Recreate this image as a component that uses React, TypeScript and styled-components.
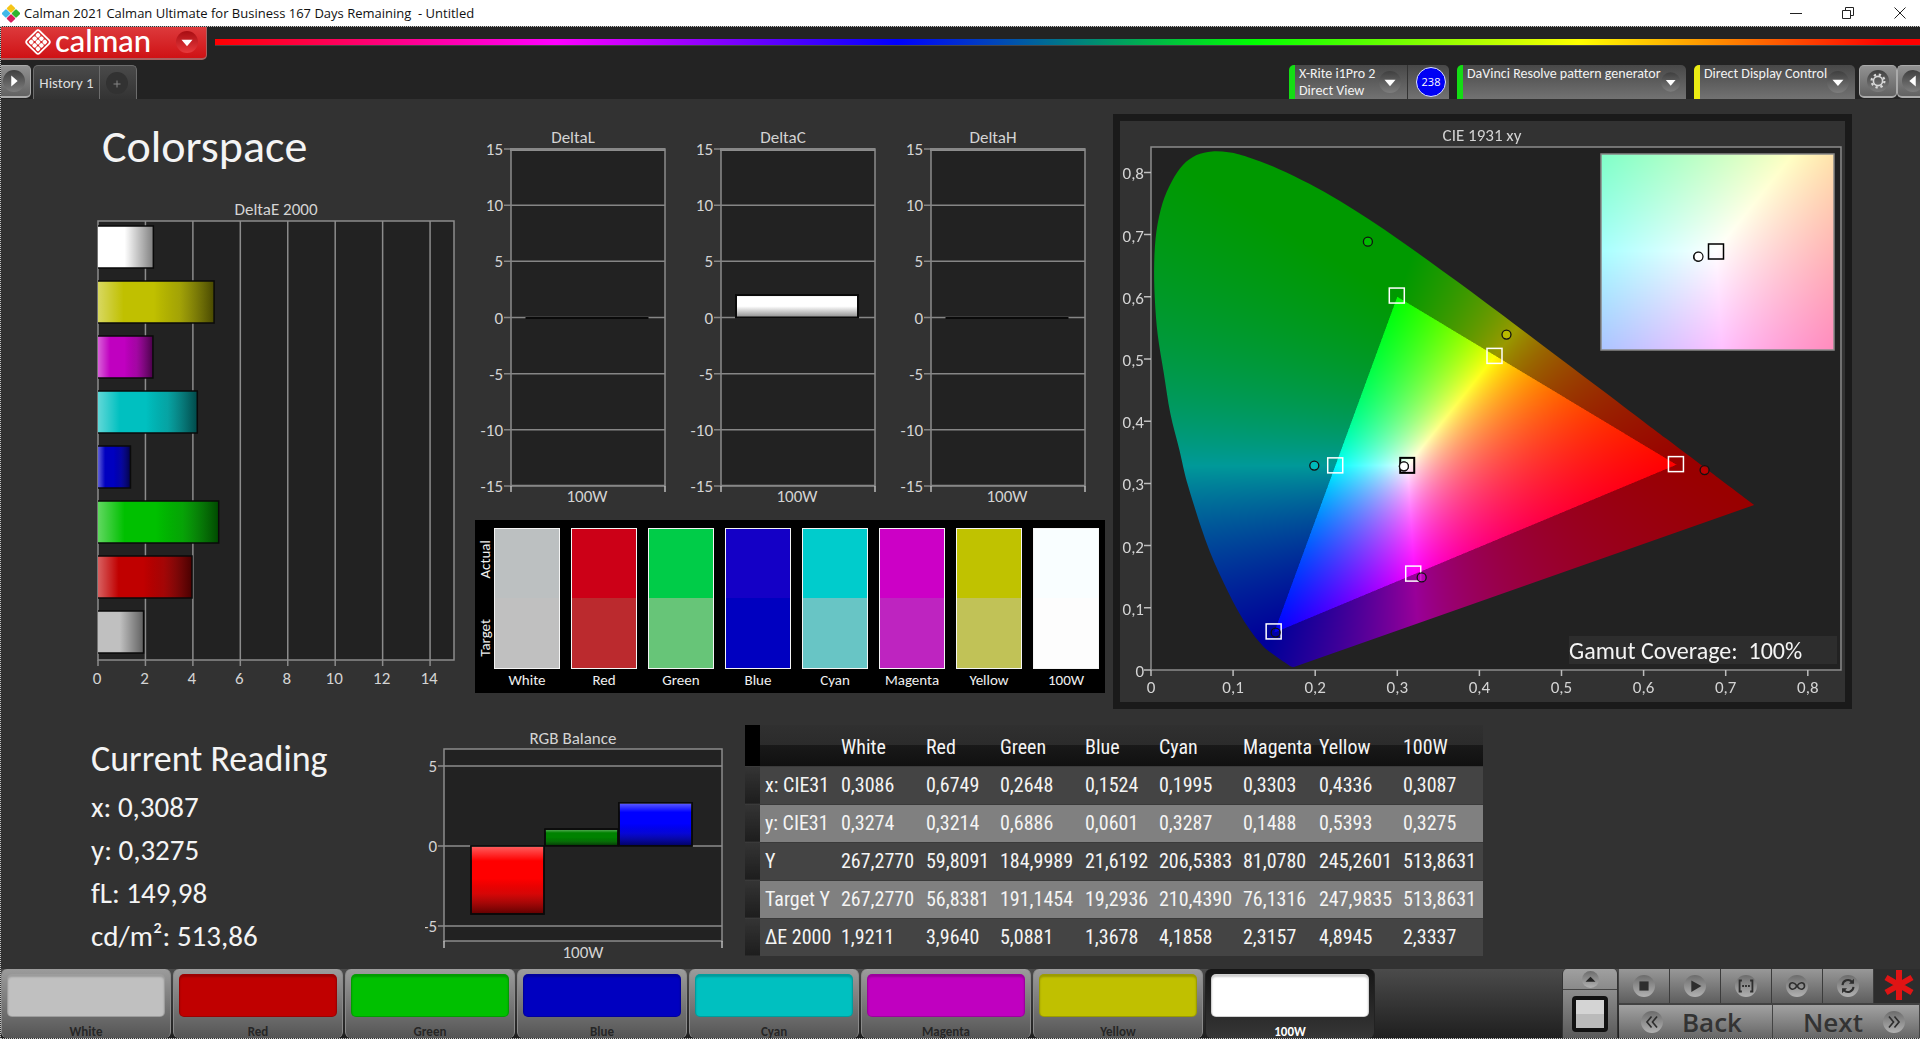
import React, { useLayoutEffect, useRef } from "react";
import styled, { createGlobalStyle, css } from "styled-components";

const uiFont = `Calibri, Carlito, Lato, sans-serif`;
const systemFont = `"Segoe UI", "Open Sans", "Noto Sans", sans-serif`;
const narrowFont = `"Roboto Condensed", Roboto, sans-serif`;

const GlobalStyle = createGlobalStyle`
  *, *::before, *::after { box-sizing: border-box; }
  body { margin: 0; background: #323232; font-family: ${uiFont}; }
  h1, h2, p { margin: 0; font-weight: 400; }
  button { font: inherit; border: 0; padding: 0; color: inherit; background: none; cursor: pointer; }
  svg { display: block; }
`;

/* ---------- window frame ---------- */

const Page = styled.div`
  display: flex;
  flex-direction: column;
  min-height: 100vh;
`;

const TitleBar = styled.header`
  display: flex;
  align-items: center;
  height: 26px;
  padding-left: 2px;
  background: #fff;
  color: #111;
  font: 13px/26px ${systemFont};
`;

const TitleText = styled.span`
  flex: 1;
  padding-left: 4px;
  white-space: pre;
`;

const WindowButton = styled.button`
  display: grid;
  place-items: center;
  width: 52px;
  height: 26px;
`;

const WindowButtons = styled.div`
  display: flex;
  margin-right: -6px;
  overflow: hidden;
`;

const AppFrame = styled.div`
  display: flex;
  flex: 1;
  flex-direction: column;
  border: 1px dotted #c4c4c4;
  border-right: 0;
  background: #323232;
`;

/* ---------- top bar ---------- */

const TopBar = styled.div`
  height: 72px;
  background: #232323;
`;

const BrandRow = styled.div`
  display: flex;
  align-items: flex-start;
  gap: 8px;
  height: 38px;
`;

const BrandButton = styled.button`
  display: flex;
  align-items: center;
  width: 206px;
  height: 33px;
  padding: 0 8px 2px 23px;
  border: 1px solid #a86060;
  border-width: 0 1px 2px 0;
  border-radius: 0 0 5px 0;
  background: linear-gradient(#dd3a3c, #cf1215);
  color: #fff;
`;

const BrandName = styled.span`
  flex: 1;
  padding: 0 0 4px 3px;
  text-align: left;
  font: 500 31px/24px "Lato Medium", Lato, sans-serif;
`;

const Spectrum = styled.div`
  flex: 1;
  height: 7px;
  margin-top: 12px;
  border-bottom: 1px solid #444;
  background: linear-gradient(90deg, #f00, #f0f 20%, #00f 40%, #0f0 61%, #ff0 80%, #f00 98%);
`;

const TabRow = styled.div`
  display: flex;
  height: 34px;
`;

const GreyKey = styled.button<{ $side: "left" | "right" | "both" }>`
  display: grid;
  place-items: center;
  height: 33px;
  width: ${(p) => (p.$side === "left" ? 30 : p.$side === "both" ? 38 : 23)}px;
  border: 1px solid #aaa;
  border-radius: ${(p) => (p.$side === "left" ? "0 5px 5px 0" : p.$side === "both" ? "5px" : "5px 0 0 5px")};
  border-bottom-width: 2px;
  ${(p) => p.$side === "left" && css`border-left: 0; padding-right: 4px;`}
  ${(p) => p.$side === "right" && css`border-right: 0; justify-items: start; padding-left: 4px; overflow: hidden;`}
  background: linear-gradient(#929292, #626262);
`;

const HistoryTabs = styled.div`
  display: flex;
  margin-left: 2px;
  border: 1px solid #6c6c6c;
  border-bottom: 0;
  border-radius: 5px 5px 0 0;
  background: linear-gradient(#4a4a4a, #333);
`;

const HistoryTab = styled.button`
  width: 66px;
  border-right: 1px solid #6c6c6c;
  color: #ddd;
  font-size: 15px;
`;

const AddTab = styled.button`
  display: grid;
  place-items: center;
  width: 36px;
  padding-right: 2px;
`;

const DeviceTabs = styled.div`
  display: flex;
  gap: 8px;
  margin-left: auto;
  margin-right: 4px;
`;

const DeviceTab = styled.div<{ $width: number; $status: string }>`
  display: flex;
  width: ${(p) => p.$width}px;
  border-left: 6px solid ${(p) => p.$status};
  border-radius: 5px 5px 0 0;
  background: linear-gradient(#484848, #727272);
`;

const DeviceButton = styled.button`
  display: flex;
  flex: 1;
  align-items: center;
  justify-content: space-between;
  min-width: 0;
  padding: 0 6px 0 4px;
  color: #f2f2f2;
  text-align: left;
  white-space: nowrap;
  font-size: 14px;
  line-height: 17px;
`;

const DeviceLabel = styled.span`
  align-self: flex-start;
`;

const MeterCell = styled.div`
  display: grid;
  align-items: center;
  justify-items: end;
  width: 42px;
  padding-right: 3px;
  border-left: 1px solid #333;
`;

const MeterBadge = styled.span`
  width: 30px;
  height: 30px;
  border: 1px solid #dfe4ff;
  border-radius: 50%;
  background: #0000f4;
  color: #fff;
  text-align: center;
  font: 11px/28px ${systemFont};
`;

/* ---------- work area ---------- */

const WorkArea = styled.main`
  flex: 1;
  padding-top: 15px;
`;

const UpperGrid = styled.div`
  display: grid;
  grid-template-columns: 474fr 638fr 807fr;
  align-items: start;
`;

const LowerGrid = styled.div`
  display: grid;
  grid-template-columns: 424fr 320fr 738fr 437fr;
  align-items: start;
  padding-top: 16px;
`;

const DeltaEColumn = styled.section`
  padding-left: 89px;
`;

const PageHeading = styled.h1`
  padding: 4px 0 15px 12px;
  color: #f4f4f4;
  font-size: 46px;
  line-height: 56px;
`;

const ChartSvg = styled.svg`
  width: 100%;
  height: auto;
  font-family: ${uiFont};
  font-size: 17px;
  fill: #d4d4d4;
`;

const DeltaColumn = styled.section`
  padding: 12px 8px 0 0;
`;

const ChartTrio = styled.div`
  display: grid;
  grid-template-columns: repeat(3, 1fr);
`;

const SwatchBoard = styled.div`
  display: flex;
  margin-top: 10px;
  padding: 8px 6px 2px 0;
  background: #000;
  color: #f0f0f0;
  font-size: 15px;
  line-height: 22px;
`;

const SideLabels = styled.div`
  display: grid;
  grid-template-rows: 62px 96px;
  width: 19px;
  height: 141px;
  color: #f0f0f0;
`;

const SideLabel = styled.span`
  place-self: center;
  writing-mode: vertical-rl;
  rotate: 180deg;
  line-height: 18px;
`;

const SwatchList = styled.div`
  display: grid;
  flex: 1;
  grid-template-columns: repeat(8, 1fr);
  column-gap: 11px;
`;

const SwatchFigure = styled.figure`
  margin: 0;
  text-align: center;
`;

const SwatchPair = styled.div<{ $actual: string; $target: string }>`
  height: 141px;
  border: 1px solid #f4f4f4;
  background: linear-gradient(${(p) => p.$actual} 50%, ${(p) => p.$target} 50%);
`;

const CiePanel = styled.section`
  display: grid;
  margin-right: 68px;
  border: 7px solid #1a1a1a;

  > * { grid-area: 1 / 1; }
`;

const CieCanvas = styled.canvas`
  width: 100%;
  height: auto;
`;

/* ---------- readings ---------- */

const Readings = styled.section`
  padding-left: 90px;
  color: #f4f4f4;
`;

const ReadingTitle = styled.h2`
  padding-top: 7px;
  font-size: 36px;
  line-height: 54px;
`;

const ReadingRow = styled.p`
  font-size: 29px;
  line-height: 43px;
`;

const DataTable = styled.table`
  width: 100%;
  border-collapse: collapse;
  table-layout: fixed;
  color: #f4f4f4;
  font: 20px/24px ${narrowFont};

  th, td {
    padding: 0 0 0 5px;
    text-align: left;
    font-weight: 400;
    white-space: nowrap;
  }
`;

const HeadRow = styled.tr`
  height: 41px;
  background: linear-gradient(#303030, #2b2b2b 50%, #191919 50%, #101010);

  > td:first-child { background: #000; }
  > th { padding-top: 4px; }
`;

const DataRow = styled.tr<{ $light: boolean }>`
  height: 38px;
  border-top: 1px solid #3a3a3a;
  background: ${(p) => (p.$light ? "#808080" : "#444")};

  > td:first-child { background: linear-gradient(#343434, #1d1d1d); }
`;

/* ---------- bottom bar ---------- */

const BottomBar = styled.footer`
  display: flex;
  align-items: stretch;
  height: 69px;
  background: linear-gradient(#4b4b4b, #1f1f1f);
`;

const PatchList = styled.div`
  display: flex;
  flex: 1;
  gap: 2px;
  min-width: 0;
`;

const PatchButton = styled.button<{ $active?: boolean }>`
  display: flex;
  flex: 0 1 170px;
  flex-direction: column;
  gap: 3px;
  padding: 5px 5px 0;
  border: 1px solid #8a8a8a;
  border-width: 0 1px;
  border-radius: 6px;
  background: linear-gradient(#9c9c9c, #555);
  color: #262626;
  font-size: 13px;
  font-weight: 700;
  line-height: 24px;
  ${(p) => p.$active && css`
    border-color: #222;
    background: linear-gradient(#161616, #363636);
    color: #fff;
  `}
`;

const PatchColor = styled.span<{ $color: string }>`
  width: 100%;
  height: 43px;
  flex: none;
  border: 1px solid rgba(0, 0, 0, 0.18);
  border-radius: 5px;
  background: ${(p) => p.$color};
  box-shadow: inset 0 2px 2px rgba(0, 0, 0, 0.2);
`;

const PatchName = styled.span`
  width: 100%;
  text-align: center;
`;

const LevelColumn = styled.div`
  display: flex;
  flex-direction: column;
  width: 56px;
  margin-right: 1px;
  border: 1px solid #333;
  border-width: 0 1px;
  border-radius: 5px 5px 0 0;
  overflow: hidden;
`;

const LevelUp = styled.button`
  display: grid;
  place-items: center;
  height: 21px;
  border-bottom: 1px solid #444;
  background: linear-gradient(#a0a0a0, #8a8a8a);
`;

const LevelPick = styled.button`
  display: grid;
  flex: 1;
  place-items: center;
  background: linear-gradient(#8c8c8c, #5a5a5a);
`;

const LevelChip = styled.span`
  width: 36px;
  height: 36px;
  border: 4px solid #111;
  border-radius: 4px;
  background: linear-gradient(#d4d4d4 50%, #bababa 50%);
`;

const Navigation = styled.div`
  display: grid;
  grid-template-columns: repeat(5, 51px) 46px;
  grid-template-rows: 34px 35px;
`;

const TransportButton = styled.button`
  display: grid;
  place-items: center;
  border-right: 1px solid #3c3c3c;
  background: linear-gradient(#989898, #5e5e5e);
`;

const Notice = styled.div`
  display: grid;
  place-items: center;
  padding: 0 0 2px 4px;
  background: #2d2d2d;
`;

const StepRow = styled.div`
  display: grid;
  grid-column: 1 / -1;
  grid-template-columns: 154px 1fr;
`;

const StepButton = styled.button<{ $forward?: boolean }>`
  display: flex;
  align-items: center;
  justify-content: space-between;
  padding: ${(p) => (p.$forward ? "0 14px 0 30px" : "0 30px 0 22px")};
  border-top: 2px solid #424242;
  border-right: 1px solid #444;
  background: linear-gradient(#a2a2a2, #666);
  color: #333;
  font: 600 26px/30px ${systemFont};
`;

/* ---------- icons ---------- */

type KnobTone = "dark" | "red" | "light";
const knobTones: Record<KnobTone, [string, string]> = {
  dark: ["#3f3f3f", "#7d7d7d"],
  red: ["#a80d12", "#e8393c"],
  light: ["#6c6c6c", "#b2b2b2"],
};

function Knob({ tone = "dark", size = 22, children }: { tone?: KnobTone; size?: number; children: React.ReactNode }) {
  const id = `knob-${tone}`;
  return (
    <svg width={size} height={size} viewBox="0 0 24 24" aria-hidden="true">
      <defs>
        <linearGradient id={id} x1="0" y1="0" x2="0" y2="1">
          <stop offset="0" stopColor={knobTones[tone][0]} />
          <stop offset="1" stopColor={knobTones[tone][1]} />
        </linearGradient>
      </defs>
      <circle cx="12" cy="12" r="12" fill={`url(#${id})`} />
      {children}
    </svg>
  );
}

const DownArrow = () => <path d="M6 9.500h12l-6 7z" fill="#fff" />;

function AppIcon() {
  return (
    <svg width="18" height="19" viewBox="1 1 16.500 16.500" aria-hidden="true">
      <g transform="rotate(45 9.250 9.250)">
        <rect x="3" y="3" width="6" height="6" rx="1" fill="#f5c518" />
        <rect x="9.500" y="3" width="6" height="6" rx="1" fill="#2fb52f" />
        <rect x="3" y="9.500" width="6" height="6" rx="1" fill="#41b8e8" />
        <rect x="9.500" y="9.500" width="6" height="6" rx="1" fill="#d81e5b" />
      </g>
    </svg>
  );
}

function BrandIcon() {
  const cells = [0, 1, 2].flatMap((r) => [0, 1, 2].map((c) => [r, c]));
  return (
    <svg width="28" height="28" viewBox="0 0 28 28" aria-hidden="true">
      <g transform="rotate(45 14 14)">
        <rect x="5" y="5" width="18" height="18" rx="2.500" fill="none" stroke="#fff" strokeWidth="1.800" />
        {cells.map(([r, c]) => (
          <rect key={`${r}${c}`} x={7.1 + c * 4.8} y={7.1 + r * 4.8} width="4.200" height="4.200" rx="1.500" fill="#fff" />
        ))}
      </g>
    </svg>
  );
}

/* ---------- data ---------- */

const patches = [
  { name: "White", color: "#c0c0c0", actual: "#bcc0c1", target: "#c0c0c0", x: "0,3086", y: "0,3274", Y: "267,2770", tY: "267,2770", dE: "1,9211" },
  { name: "Red", color: "#c00000", actual: "#cc0017", target: "#bb2a2e", x: "0,6749", y: "0,3214", Y: "59,8091", tY: "56,8381", dE: "3,9640" },
  { name: "Green", color: "#00c000", actual: "#00cc48", target: "#67c578", x: "0,2648", y: "0,6886", Y: "184,9989", tY: "191,1454", dE: "5,0881" },
  { name: "Blue", color: "#0000c0", actual: "#1400c6", target: "#0000c0", x: "0,1524", y: "0,0601", Y: "21,6192", tY: "19,2936", dE: "1,3678" },
  { name: "Cyan", color: "#00c0c0", actual: "#00cccc", target: "#68c5c5", x: "0,1995", y: "0,3287", Y: "206,5383", tY: "210,4390", dE: "4,1858" },
  { name: "Magenta", color: "#c000c0", actual: "#cc00c6", target: "#be24c0", x: "0,3303", y: "0,1488", Y: "81,0780", tY: "76,1316", dE: "2,3157" },
  { name: "Yellow", color: "#c0c000", actual: "#c0c200", target: "#c1c257", x: "0,4336", y: "0,5393", Y: "245,2601", tY: "247,9835", dE: "4,8945" },
  { name: "100W", color: "#ffffff", actual: "#f9feff", target: "#fdfdfd", x: "0,3087", y: "0,3275", Y: "513,8631", tY: "513,8631", dE: "2,3337" },
];

const tableRows = [
  { label: "x: CIE31", key: "x" },
  { label: "y: CIE31", key: "y" },
  { label: "Y", key: "Y" },
  { label: "Target Y", key: "tY" },
  { label: "ΔE 2000", key: "dE" },
] as const;

const columnWidths = [15, 76, 85, 74, 85, 74, 84, 76, 84, 85];

const toNumber = (s: string) => Number(s.replace(",", "."));

const frameLine = { fill: "#222", stroke: "#8c8c8c", strokeWidth: 1.5 };

/* ---------- charts ---------- */

function BarShade({ id, vertical }: { id: string; vertical?: boolean }) {
  return (
    <linearGradient id={id} x1="0" y1="0" x2={vertical ? 0 : 1} y2={vertical ? 1 : 0}>
      <stop offset="0" stopColor="#fff" stopOpacity="0.38" />
      <stop offset="0.22" stopColor="#fff" stopOpacity="0" />
      <stop offset="0.48" stopColor="#000" stopOpacity="0" />
      <stop offset="0.7" stopColor="#222" stopOpacity="0.18" />
      <stop offset="1" stopColor="#000" stopOpacity="0.62" />
    </linearGradient>
  );
}

function DeltaEChart() {
  const unit = 23.72;
  const bars = [...patches].reverse();
  return (
    <ChartSvg viewBox="90 189 385 501" role="img" aria-label="DeltaE 2000">
      <defs>
        <BarShade id="shade-h" />
        <linearGradient id="shade-pale">
          <stop offset="0.48" stopColor="#000" stopOpacity="0" />
          <stop offset="1" stopColor="#000" stopOpacity="0.5" />
        </linearGradient>
      </defs>
      <text x="276" y="215" textAnchor="middle">DeltaE 2000</text>
      <rect x="98" y="221" width="356" height="439" {...frameLine} />
      {[0, 2, 4, 6, 8, 10, 12, 14].map((v) => (
        <g key={v}>
          <path d={`M${98 + v * unit} ${v ? 221 : 660}V666`} stroke="#8c8c8c" strokeWidth="1.500" />
          <text x={97 + v * unit} y="684" textAnchor="middle">{v}</text>
        </g>
      ))}
      {bars.map((b, i) => {
        const w = toNumber(b.dE) * unit;
        return (
          <g key={b.name}>
            <rect x="98" y={226 + i * 55} width={w} height="42" fill={b.color} />
            <rect x="98" y={226 + i * 55} width={w} height="42" fill={/W/.test(b.name) ? "url(#shade-pale)" : "url(#shade-h)"} />
            <path d={`M98 ${226 + i * 55}h${w}v42h${-w}`} fill="none" stroke="#0a0a0a" strokeWidth="1.500" />
          </g>
        );
      })}
    </ChartSvg>
  );
}

function DeltaChart({ title, value }: { title: string; value: number }) {
  const py = (v: number) => 191.5 - v * 11.23;
  const h = value * 11.23;
  return (
    <ChartSvg viewBox="0 0 210 384" role="img" aria-label={title}>
      <defs>
        <linearGradient id="white-bar" x1="0" y1="0" x2="0" y2="1">
          <stop offset="0.5" stopColor="#fff" />
          <stop offset="1" stopColor="#8a8a8a" />
        </linearGradient>
      </defs>
      <text x="98" y="17" textAnchor="middle">{title}</text>
      <rect x="36" y="23" width="154" height="336.500" {...frameLine} />
      <path d="M35 23.500H190" stroke="#8c8c8c" strokeWidth="3" />
      {[15, 10, 5, 0, -5, -10, -15].map((v) => (
        <g key={v}>
          <path d={`M29 ${py(v)}H190`} stroke="#868686" strokeWidth="1.500" />
          <text x="28" y={py(v) + 6} textAnchor="end">{v}</text>
        </g>
      ))}
      <path d="M36 360v6M190 360v6" stroke="#bbb" strokeWidth="1.500" />
      <rect x="51" y={191.5 - h} width="122" height={Math.max(h, 1)} fill={h > 1 ? "url(#white-bar)" : "#0a0a0a"} stroke="#0a0a0a" strokeWidth={h > 1 ? 2 : 1} />
      <text x="112" y="376" textAnchor="middle">100W</text>
    </ChartSvg>
  );
}

function BalanceChart() {
  const zero = 846;
  const unit = 16;
  const bars = [
    { x: 471, v: -4.25, color: "#f00" },
    { x: 545, v: 1.05, color: "#008200" },
    { x: 619, v: 2.7, color: "#00f" },
  ];
  return (
    <ChartSvg viewBox="425 725 320 237" role="img" aria-label="RGB Balance">
      <defs><BarShade id="shade-v" vertical /></defs>
      <text x="573" y="744" textAnchor="middle">RGB Balance</text>
      <rect x="444" y="749" width="278" height="192" {...frameLine} />
      {[5, 0, -5].map((v) => (
        <g key={v}>
          <path d={`M438 ${zero - v * unit}H722`} stroke="#8c8c8c" strokeWidth="1.500" />
          <text x="437" y={zero - v * unit + 6} textAnchor="end">{v}</text>
        </g>
      ))}
      <path d="M444 941v7M722 941v7" stroke="#bbb" strokeWidth="1.500" />
      {bars.map((b) => {
        const y = Math.min(zero, zero - b.v * unit);
        const h = Math.abs(b.v) * unit;
        return (
          <g key={b.x} stroke="#0a0a0a" strokeWidth="1.500">
            <rect x={b.x} y={y} width="73" height={h} fill={b.color} />
            <rect x={b.x} y={y} width="73" height={h} fill="url(#shade-v)" />
          </g>
        );
      })}
      <text x="583" y="958" textAnchor="middle">100W</text>
    </ChartSvg>
  );
}

/* ---------- CIE 1931 chromaticity diagram ---------- */

const locus: [number, number][] = [
  [0.1741, 0.005], [0.1733, 0.0048], [0.1714, 0.0051], [0.1689, 0.0069], [0.1644, 0.0109], [0.1566, 0.0177],
  [0.144, 0.0297], [0.1355, 0.0399], [0.1241, 0.0578], [0.1096, 0.0868], [0.0913, 0.1327], [0.0687, 0.2007],
  [0.0454, 0.295], [0.0346, 0.3538], [0.0235, 0.4127], [0.0155, 0.478], [0.0082, 0.5384], [0.0046, 0.598],
  [0.0039, 0.6548], [0.0067, 0.706], [0.0139, 0.7502], [0.0253, 0.7855], [0.0389, 0.812], [0.0555, 0.828],
  [0.0743, 0.8338], [0.0943, 0.8325], [0.1142, 0.8262], [0.1547, 0.8059], [0.1929, 0.7816], [0.2296, 0.7543],
  [0.2658, 0.7243], [0.3016, 0.6923], [0.3373, 0.6589], [0.3731, 0.6245], [0.4087, 0.5896], [0.4441, 0.5547],
  [0.4788, 0.5202], [0.5125, 0.4866], [0.5448, 0.4544], [0.5752, 0.4242], [0.6029, 0.3965], [0.627, 0.3725],
  [0.6658, 0.334], [0.6915, 0.3083], [0.714, 0.2859], [0.7347, 0.2653],
];

const view = { left: 1120, top: 121, width: 725, height: 581 };
const cx = (x: number) => 1151 + x * 821;
const cy = (y: number) => 670 - y * 622;
const insetBox = { left: 1601, top: 154, width: 233, height: 196 };
const insetX = (x: number) => 1716 + (x - 0.3127) * 4500;
const insetY = (y: number) => 251 - (y - 0.329) * 3410;

/** Chromaticity to a fully bright colour; points outside Rec.709 are dimmed. */
function chromaColor(x: number, y: number): [number, number, number] {
  const X = x / y;
  const Z = (1 - x - y) / y;
  const raw = [
    3.2405 * X - 1.5371 - 0.4985 * Z,
    -0.9693 * X + 1.876 + 0.0416 * Z,
    0.0556 * X - 0.204 + 1.0572 * Z,
  ];
  const level = Math.min(...raw) < 0 ? 0.6 : 1;
  const peak = Math.max(...raw);
  return raw.map((c) => (Math.max(0, c) / peak) * 255 * level) as [number, number, number];
}

function paint(
  target: CanvasRenderingContext2D,
  box: { left: number; top: number; width: number; height: number },
  toX: (px: number) => number,
  toY: (py: number) => number,
) {
  const buffer = document.createElement("canvas");
  buffer.width = box.width;
  buffer.height = box.height;
  const ctx = buffer.getContext("2d")!;
  const image = ctx.createImageData(box.width, box.height);
  for (let j = 0; j < box.height; j++) {
    for (let i = 0; i < box.width; i++) {
      const sum = [0, 0, 0];
      for (const [dx, dy] of [[0.25, 0.25], [0.75, 0.25], [0.25, 0.75], [0.75, 0.75]]) {
        const c = chromaColor(toX(box.left + i + dx), Math.max(0.001, toY(box.top + j + dy)));
        c.forEach((v, k) => (sum[k] += v / 4));
      }
      image.data.set([...sum, 255], (j * box.width + i) * 4);
    }
  }
  ctx.putImageData(image, 0, 0);
  target.drawImage(buffer, box.left - view.left, box.top - view.top);
}

/** Smooth outline through the spectral locus, closed by the straight line of purples. */
function traceLocus(ctx: CanvasRenderingContext2D) {
  const pts = locus.map(([x, y]) => [cx(x) - view.left, cy(y) - view.top]);
  ctx.beginPath();
  ctx.moveTo(pts[0][0], pts[0][1]);
  for (let i = 0; i < pts.length - 1; i++) {
    const p0 = pts[Math.max(0, i - 1)];
    const p1 = pts[i];
    const p2 = pts[i + 1];
    const p3 = pts[Math.min(pts.length - 1, i + 2)];
    ctx.bezierCurveTo(
      p1[0] + (p2[0] - p0[0]) / 6, p1[1] + (p2[1] - p0[1]) / 6,
      p2[0] - (p3[0] - p1[0]) / 6, p2[1] - (p3[1] - p1[1]) / 6,
      p2[0], p2[1],
    );
  }
  ctx.closePath();
}

function CieChart() {
  const ref = useRef<HTMLCanvasElement>(null);

  useLayoutEffect(() => {
    const ctx = ref.current!.getContext("2d")!;
    ctx.fillStyle = "#222";
    ctx.fillRect(1151 - view.left, 147 - view.top, 691, 523);
    ctx.save();
    traceLocus(ctx);
    ctx.clip();
    paint(ctx, { left: 1151, top: 147, width: 610, height: 523 }, (px) => (px - 1151) / 821, (py) => (670 - py) / 622);
    ctx.restore();
    paint(ctx, insetBox, (px) => 0.3127 + (px - 1716) / 4500, (py) => 0.329 + (251 - py) / 3410);
  }, []);

  const targets: [number, number][] = [[0.3, 0.602], [0.419, 0.505], [0.64, 0.331], [0.225, 0.329], [0.32, 0.155], [0.15, 0.062]];
  return (
    <CiePanel>
      <CieCanvas ref={ref} width={view.width} height={view.height} />
      <ChartSvg viewBox={`${view.left} ${view.top} ${view.width} ${view.height}`} role="img" aria-label="CIE 1931 xy">
        <text x="1482" y="141" textAnchor="middle">CIE 1931 xy</text>
        <rect x="1151" y="147" width="690" height="523" {...frameLine} fill="none" />
        {[0, 1, 2, 3, 4, 5, 6, 7, 8].map((n) => {
          const label = n ? `0,${n}` : "0";
          return (
            <g key={n}>
              <path d={`M${cx(n / 10)} 670v6M1144 ${cy(n / 10)}h7`} stroke="#bdbdbd" strokeWidth="1.500" />
              <text x={cx(n / 10)} y="693" textAnchor="middle">{label}</text>
              <text x="1144" y={cy(n / 10) + 7} textAnchor="end">{label}</text>
            </g>
          );
        })}
        <g fill="none" stroke="#fff" strokeWidth="1.500">
          {targets.map(([x, y]) => <rect key={x} x={cx(x) - 8} y={cy(y) - 7.5} width="15" height="15" />)}
        </g>
        <rect x={cx(0.3127) - 7.5} y={cy(0.329) - 7.5} width="14" height="15" fill="none" stroke="#000" strokeWidth="2" />
        {patches.map((p) => (
          <circle key={p.name} cx={cx(toNumber(p.x)) - 0.5} cy={cy(toNumber(p.y))} r="4.500" fill={p.name === "White" ? "#fff" : p.color} fillOpacity={p.name === "Blue" ? 0.3 : 0.85} stroke="#111" strokeWidth="1.300" />
        ))}
        <rect x={insetBox.left} y={insetBox.top} width={insetBox.width} height={insetBox.height} fill="none" stroke="#888" strokeWidth="1.500" />
        <rect x="1708.500" y="244" width="15" height="15" fill="none" stroke="#000" strokeWidth="1.500" />
        {patches.filter((p) => p.name === "White" || p.name === "100W").map((p) => (
          <circle key={p.name} cx={insetX(toNumber(p.x)) + 0.5} cy={insetY(toNumber(p.y)) + 0.5} r="4.500" fill="#fff" stroke="#111" strokeWidth="1.200" />
        ))}
        <rect x="1569" y="636" width="268" height="28" fill="#2d2d2d" />
        <text x="1569" y="659" fontSize="24" fill="#f4f4f4" xmlSpace="preserve">Gamut Coverage:  100%</text>
      </ChartSvg>
    </CiePanel>
  );
}

/* ---------- page ---------- */

const devices = [
  { lines: ["X-Rite i1Pro 2", "Direct View"], width: 160, status: "#14dc14", meter: "238" },
  { lines: ["DaVinci Resolve pattern generator"], width: 229, status: "#14dc14" },
  { lines: ["Direct Display Control"], width: 161, status: "#ecec14" },
];

const glyph = "#2e2e2e";
const transport = [
  { label: "Stop", icon: <path d="M7 7h10v10H7z" fill={glyph} /> },
  { label: "Play", icon: <path d="M8 6l11 6-11 6.500z" fill={glyph} /> },
  { label: "Read series", icon: <path d="M7.500 6H5v12h2.500M16.500 6H19v12h-2.500M7.800 12h2M11 12h2M14.200 12h2" fill="none" stroke={glyph} strokeWidth="2" /> },
  { label: "Read continuously", icon: <path d="M12 12c-2-3-3.300-3.500-4.700-3.500a3.500 3.500 0 0 0 0 7c1.400 0 2.700-.5 4.700-3.500s3.300-3.500 4.700-3.500a3.500 3.500 0 0 1 0 7c-1.400 0-2.700-.5-4.700-3.500z" fill="none" stroke={glyph} strokeWidth="1.800" /> },
  { label: "Repeat", icon: <g fill="none" stroke={glyph} strokeWidth="2.200"><path d="M6 11a6 6 0 0 1 10.500-3.500M18 13a6 6 0 0 1-10.500 3.500" /><path d="M18.500 4v5.500H13zM5.500 20v-5.500H11z" fill={glyph} stroke="none" /></g> },
];

export default function App() {
  return (
    <Page>
      <GlobalStyle />
      <TitleBar>
        <AppIcon />
        <TitleText>{"Calman 2021 Calman Ultimate for Business 167 Days Remaining  - Untitled"}</TitleText>
        <WindowButtons>
          <WindowButton aria-label="Minimize"><svg width="12" height="12"><path d="M0 6.500h12" stroke="#222" /></svg></WindowButton>
          <WindowButton aria-label="Restore"><svg width="12" height="12" fill="none" stroke="#222"><path d="M.5 3.500h8v8h-8zM3.500 3.500v-3h8v8h-3" /></svg></WindowButton>
          <WindowButton aria-label="Close"><svg width="12" height="12" stroke="#222"><path d="M.5.5l11 11M11.500.5l-11 11" /></svg></WindowButton>
        </WindowButtons>
      </TitleBar>
      <AppFrame>
        <TopBar>
          <BrandRow>
            <BrandButton aria-haspopup="menu">
              <BrandIcon />
              <BrandName>calman</BrandName>
              <Knob tone="red"><DownArrow /></Knob>
            </BrandButton>
            <Spectrum />
          </BrandRow>
          <TabRow>
            <GreyKey $side="left" aria-label="Expand left panel"><Knob><path d="M9 6v12l7-6z" fill="#fff" /></Knob></GreyKey>
            <HistoryTabs>
              <HistoryTab>History 1</HistoryTab>
              <AddTab aria-label="Add history">
                <svg width="22" height="22" viewBox="0 0 22 22"><circle cx="11" cy="11" r="11" fill="#323232" /><path d="M7.500 12h7M11 8.500v7" stroke="#858585" /></svg>
              </AddTab>
            </HistoryTabs>
            <DeviceTabs>
              {devices.map((d) => (
                <DeviceTab key={d.lines[0]} $width={d.width} $status={d.status}>
                  <DeviceButton aria-haspopup="menu">
                    <DeviceLabel>{d.lines.map((l) => <div key={l}>{l}</div>)}</DeviceLabel>
                    <Knob><DownArrow /></Knob>
                  </DeviceButton>
                  {d.meter && <MeterCell><MeterBadge>{d.meter}</MeterBadge></MeterCell>}
                </DeviceTab>
              ))}
            </DeviceTabs>
            <GreyKey $side="both" aria-label="Settings">
              <Knob>
                <circle cx="12" cy="12" r="5" fill="none" stroke="#d8d8d8" strokeWidth="1.800" />
                <circle cx="12" cy="12" r="7" fill="none" stroke="#d8d8d8" strokeWidth="2.400" strokeDasharray="2.500 2.998" />
              </Knob>
            </GreyKey>
            <GreyKey $side="right" aria-label="Expand right panel"><Knob><path d="M15 6v12l-7-6z" fill="#fff" /></Knob></GreyKey>
          </TabRow>
        </TopBar>

        <WorkArea>
          <UpperGrid>
            <DeltaEColumn>
              <PageHeading>Colorspace</PageHeading>
              <DeltaEChart />
            </DeltaEColumn>
            <DeltaColumn>
              <ChartTrio>
                <DeltaChart title="DeltaL" value={0} />
                <DeltaChart title="DeltaC" value={2} />
                <DeltaChart title="DeltaH" value={0} />
              </ChartTrio>
              <SwatchBoard>
                <SideLabels>
                  <SideLabel>Actual</SideLabel>
                  <SideLabel>Target</SideLabel>
                </SideLabels>
                <SwatchList>
                  {patches.map((p) => (
                    <SwatchFigure key={p.name}>
                      <SwatchPair $actual={p.actual} $target={p.target} />
                      <figcaption>{p.name}</figcaption>
                    </SwatchFigure>
                  ))}
                </SwatchList>
              </SwatchBoard>
            </DeltaColumn>
            <CieChart />
          </UpperGrid>

          <LowerGrid>
            <Readings>
              <ReadingTitle>Current Reading</ReadingTitle>
              <ReadingRow>x: 0,3087</ReadingRow>
              <ReadingRow>y: 0,3275</ReadingRow>
              <ReadingRow>fL: 149,98</ReadingRow>
              <ReadingRow>cd/m²: 513,86</ReadingRow>
            </Readings>
            <BalanceChart />
            <DataTable>
              <colgroup>{columnWidths.map((w, i) => <col key={i} width={w} />)}</colgroup>
              <thead>
                <HeadRow>
                  <td />
                  <td />
                  {patches.map((p) => <th key={p.name} scope="col">{p.name}</th>)}
                </HeadRow>
              </thead>
              <tbody>
                {tableRows.map((row, i) => (
                  <DataRow key={row.key} $light={i % 2 === 1}>
                    <td />
                    <th scope="row">{row.label}</th>
                    {patches.map((p) => <td key={p.name}>{p[row.key]}</td>)}
                  </DataRow>
                ))}
              </tbody>
            </DataTable>
          </LowerGrid>
        </WorkArea>

        <BottomBar>
          <PatchList>
            {patches.map((p) => (
              <PatchButton key={p.name} $active={p.name === "100W"}>
                <PatchColor $color={p.color} />
                <PatchName>{p.name}</PatchName>
              </PatchButton>
            ))}
          </PatchList>
          <LevelColumn>
            <LevelUp aria-label="Show levels"><Knob tone="light" size={17}><path d="M5 15h14l-7-7z" fill="#222" /></Knob></LevelUp>
            <LevelPick aria-label="Level"><LevelChip /></LevelPick>
          </LevelColumn>
          <Navigation>
            {transport.map((t) => (
              <TransportButton key={t.label} aria-label={t.label}><Knob tone="light">{t.icon}</Knob></TransportButton>
            ))}
            <Notice>
              <svg width="30" height="30" viewBox="0 0 30 30" aria-hidden="true">
                <path d="M15 0v30M2 7.500l26 15M28 7.500l-26 15" stroke="#e01414" strokeWidth="6" />
              </svg>
            </Notice>
            <StepRow>
              <StepButton>
                <Knob tone="light"><path d="M11.500 6l-5 6 5 6M17.500 6l-5 6 5 6" fill="none" stroke={glyph} strokeWidth="1.800" /></Knob>
                Back
              </StepButton>
              <StepButton $forward>
                Next
                <Knob tone="light"><path d="M6.500 6l5 6-5 6M12.500 6l5 6-5 6" fill="none" stroke={glyph} strokeWidth="1.800" /></Knob>
              </StepButton>
            </StepRow>
          </Navigation>
        </BottomBar>
      </AppFrame>
    </Page>
  );
}
